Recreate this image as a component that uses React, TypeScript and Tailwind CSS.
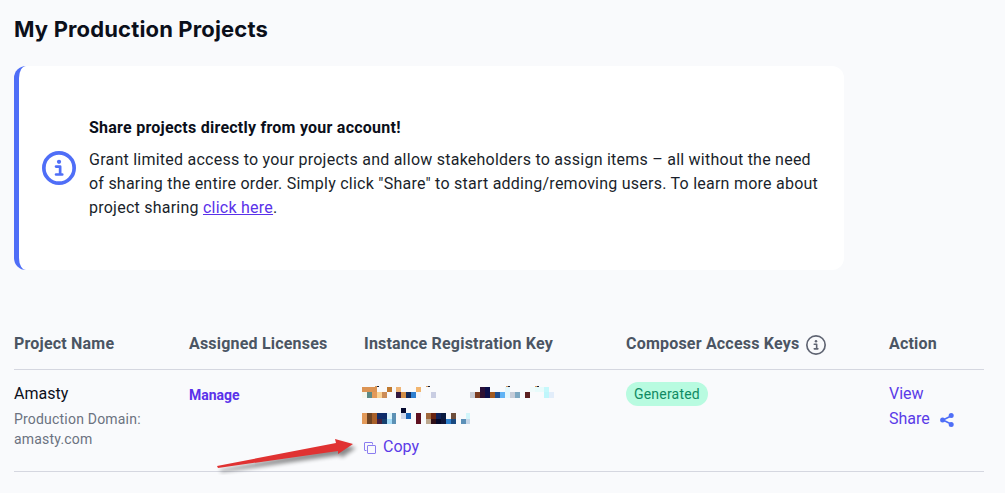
import React from "react";

const headCell = "text-base font-bold leading-6 tracking-[0.2px] text-[#4b5563]";

// censored key, pixel blocks: [x, y, w, h, colour]
const keyBlocks: [number, number, number, number, string][] = [
  // first line, top row
  [0, 1, 15, 5, "#dc9454"], [25, 1, 5, 5, "#c07a30"], [34, 1, 5, 5, "#efb577"], [54, 1, 5, 5, "#f2b56f"],
  [118, 1, 5, 5, "#2a1038"], [123, 1, 5, 5, "#0c0f4a"], [143, 1, 5, 5, "#e4f7fd"],
  [168, 1, 5, 5, "#f1fbfb"], [173, 1, 9, 5, "#e8fbfb"], [182, 1, 5, 5, "#c6f8fb"],
  // flecks above the first line
  [13, 0, 2, 1, "#d89a5a"], [15, 0, 2, 1, "#1a2038"], [64, 0, 2, 1, "#d89a5a"], [66, 0, 2, 1, "#1a2038"],
  [144, 0, 2, 1, "#d89a5a"], [146, 0, 2, 1, "#1a2038"], [173, 0, 2, 1, "#d89a5a"], [175, 0, 2, 1, "#1a2038"],
  // first line, bottom row
  [0, 6, 5, 6, "#f3f6ee"], [5, 6, 5, 6, "#5b8a85"], [10, 6, 5, 6, "#e39a5a"], [15, 6, 5, 6, "#fbd394"], [20, 6, 5, 6, "#cc8c58"],
  [34, 6, 5, 6, "#33193f"], [39, 6, 5, 6, "#d18e48"], [44, 6, 5, 6, "#11295a"], [49, 6, 5, 6, "#2f7fd0"], [54, 6, 5, 6, "#f4f6fb"],
  [69, 6, 5, 6, "#c9cde2"],
  [108, 6, 5, 6, "#c9cbd3"], [113, 6, 5, 6, "#7a3a1e"], [118, 6, 5, 6, "#2f1030"], [123, 6, 5, 6, "#0c0f4a"],
  [128, 6, 5, 6, "#a25a20"], [133, 6, 5, 6, "#1f4f90"], [138, 6, 5, 6, "#5fb3f5"], [143, 6, 5, 6, "#e4f7fd"],
  [148, 6, 5, 6, "#c6ccd8"], [153, 6, 5, 6, "#7ea8c2"], [163, 6, 5, 6, "#5c2020"],
  [182, 6, 5, 6, "#bff6fb"], [187, 6, 5, 6, "#e2edfa"],
  // second line
  [39, 22, 5, 5, "#050a30"],
  [0, 27, 5, 11, "#e39a5a"], [5, 27, 5, 11, "#6e4424"], [10, 27, 5, 11, "#a8602a"], [15, 27, 10, 6, "#0f2c6a"],
  [15, 33, 5, 5, "#45203f"], [20, 33, 5, 5, "#15406e"], [25, 27, 5, 6, "#dcf4fb"], [25, 33, 5, 5, "#a5dcf8"], [30, 27, 4, 11, "#5c90b4"],
  [39, 27, 5, 6, "#cfd8ec"], [44, 27, 5, 6, "#1a64b8"],
  [54, 27, 5, 11, "#5e1020"], [64, 27, 5, 6, "#a0683c"], [64, 33, 5, 5, "#bca890"], [69, 27, 5, 6, "#6a2410"], [69, 33, 5, 5, "#301018"],
  [74, 27, 5, 6, "#10235a"], [74, 33, 5, 5, "#050a2a"], [79, 27, 5, 6, "#0a1a40"], [79, 33, 5, 5, "#10153a"],
  [84, 33, 5, 5, "#2f80cc"], [89, 27, 5, 6, "#6e4e3c"], [89, 33, 5, 5, "#1a4a80"],
  [99, 33, 5, 5, "#5c90b8"], [104, 27, 4, 6, "#d2f6fb"], [104, 33, 4, 5, "#c6d6e8"],
];

function InfoIcon({ size, color, stroke }: { size: number; color: string; stroke: number }) {
  return (
    <svg width={size} height={size} viewBox="0 0 24 24" fill="none" className="shrink-0">
      <circle cx="12" cy="12" r={12 - stroke / 2} stroke={color} strokeWidth={stroke} />
      <circle cx="12" cy="7.6" r="1.5" fill={color} />
      <path d="M9.9 11h2.9v5.6h1.5M9.9 16.6h4.4" stroke={color} strokeWidth="1.9" strokeLinecap="round" strokeLinejoin="round" />
    </svg>
  );
}

function Arrow() {
  return (
    <svg className="absolute left-[215px] top-[435px]" width="146" height="40" viewBox="0 0 146 40">
      <path d="M2 31 L121 8 L120 4 L138 9 L123 19 L123 16 L3 33 Z" fill="#000" opacity="0.45" transform="translate(3 4)" style={{ filter: "blur(2px)" }} />
      <path d="M2 31 L121 8 L120 4 L138 9 L123 19 L123 16 L3 33 Z" fill="#e03232" />
    </svg>
  );
}

export default function App() {
  return (
    <div className="relative h-[493px] w-[1005px] overflow-hidden bg-[#f9fafc] font-['Roboto',sans-serif] text-[#111827]">
      <div className="px-[14px] pt-[17px]">
        <h1 className="font-['Inter',sans-serif] text-[22px] font-bold leading-6 tracking-[0.15px] text-[#0b0f1a]">My Production Projects</h1>

        <div className="mt-[25px] flex h-[204px] w-[830px] items-center rounded-xl border-l-[5px] border-[#4f6ef7] bg-white pl-[23px]">
          <div className="mr-[13px]">
            <InfoIcon size={34} color="#4f6ef7" stroke={2.6} />
          </div>
          <div className="w-[736px] text-base leading-6 tracking-[0.24px] text-[#1a1f2b]">
            <p className="mb-[8px] font-bold text-[#0b0f1a]">Share projects directly from your account!</p>
            <p>
              Grant limited access to your projects and allow stakeholders to assign items – all without the need
              of sharing the entire order. Simply click "Share" to start adding/removing users. To learn more about
              project sharing <a className="text-[#5a32ea] underline">click here</a>.
            </p>
          </div>
        </div>

        <div className="mt-[53px] w-[970px]">
          <div className="flex h-[47px] border-b border-[#d5d7e0] pt-[9px]">
            <div className={`w-[175px] ${headCell}`}>Project Name</div>
            <div className={`w-[175px] ${headCell}`}>Assigned Licenses</div>
            <div className={`w-[262px] ${headCell}`}>Instance Registration Key</div>
            <div className={`flex w-[263px] items-start gap-[7px] ${headCell}`}>
              Composer Access Keys
              <div className="mt-[3px]">
                <InfoIcon size={20} color="#5f6472" stroke={2} />
              </div>
            </div>
            <div className={headCell}>Action</div>
          </div>

          <div className="flex h-[102px] border-b border-[#d5d7e0] pt-[12px]">
            <div className="w-[175px]">
              <div className="text-base leading-6 text-[#0b0f1a]">Amasty</div>
              <div className="mt-[3px] w-[140px] text-sm leading-5 tracking-[0.2px] text-[#6b7280]">Production Domain: amasty.com</div>
            </div>
            <div className="w-[175px] pt-[1px]">
              <a className="text-sm font-bold leading-5 text-[#5a32ea]">Manage</a>
            </div>
            <div className="w-[262px]">
              <svg width="195" height="41" viewBox="0 0 195 41" className="mt-[4px] -ml-[2px] block">
                {keyBlocks.map(([x, y, w, h, c], i) => (
                  <rect key={i} x={x} y={y} width={w} height={h} fill={c} />
                ))}
              </svg>
              <a className="mt-[8px] flex items-center gap-[7px] text-base leading-6 text-[#5b3be8]">
                <svg width="12" height="12" viewBox="0 0 12 12" fill="none" stroke="#8b7df0" strokeWidth="1" className="mt-[1px]">
                  <path d="M2.5 8.5H1a.5.5 0 0 1-.5-.5V1A.5.5 0 0 1 1 .5h7a.5.5 0 0 1 .5.5v1.5" />
                  <rect x="3.5" y="3.5" width="8" height="8" rx="0.5" />
                </svg>
                Copy
              </a>
            </div>
            <div className="w-[263px]">
              <span className="inline-block h-6 rounded-full bg-[#b8fbe0] px-2 text-sm leading-6 tracking-[0.2px] text-[#0f8a63]">Generated</span>
            </div>
            <div className="-mt-[1px] text-base leading-[25px] text-[#5b3be8]">
              <div>View</div>
              <div className="flex items-center gap-[10px]">
                Share
                <svg width="14" height="14" viewBox="0 0 14 14" className="mt-[2px]">
                  <path d="M11 3 3 7l8 4" fill="none" stroke="#4f6ef7" strokeWidth="1.6" />
                  <circle cx="11.2" cy="2.6" r="2.5" fill="#4f6ef7" />
                  <circle cx="2.6" cy="7" r="2.5" fill="#4f6ef7" />
                  <circle cx="11.2" cy="11.4" r="2.5" fill="#4f6ef7" />
                </svg>
              </div>
            </div>
          </div>
        </div>
      </div>
      <Arrow />
    </div>
  );
}
